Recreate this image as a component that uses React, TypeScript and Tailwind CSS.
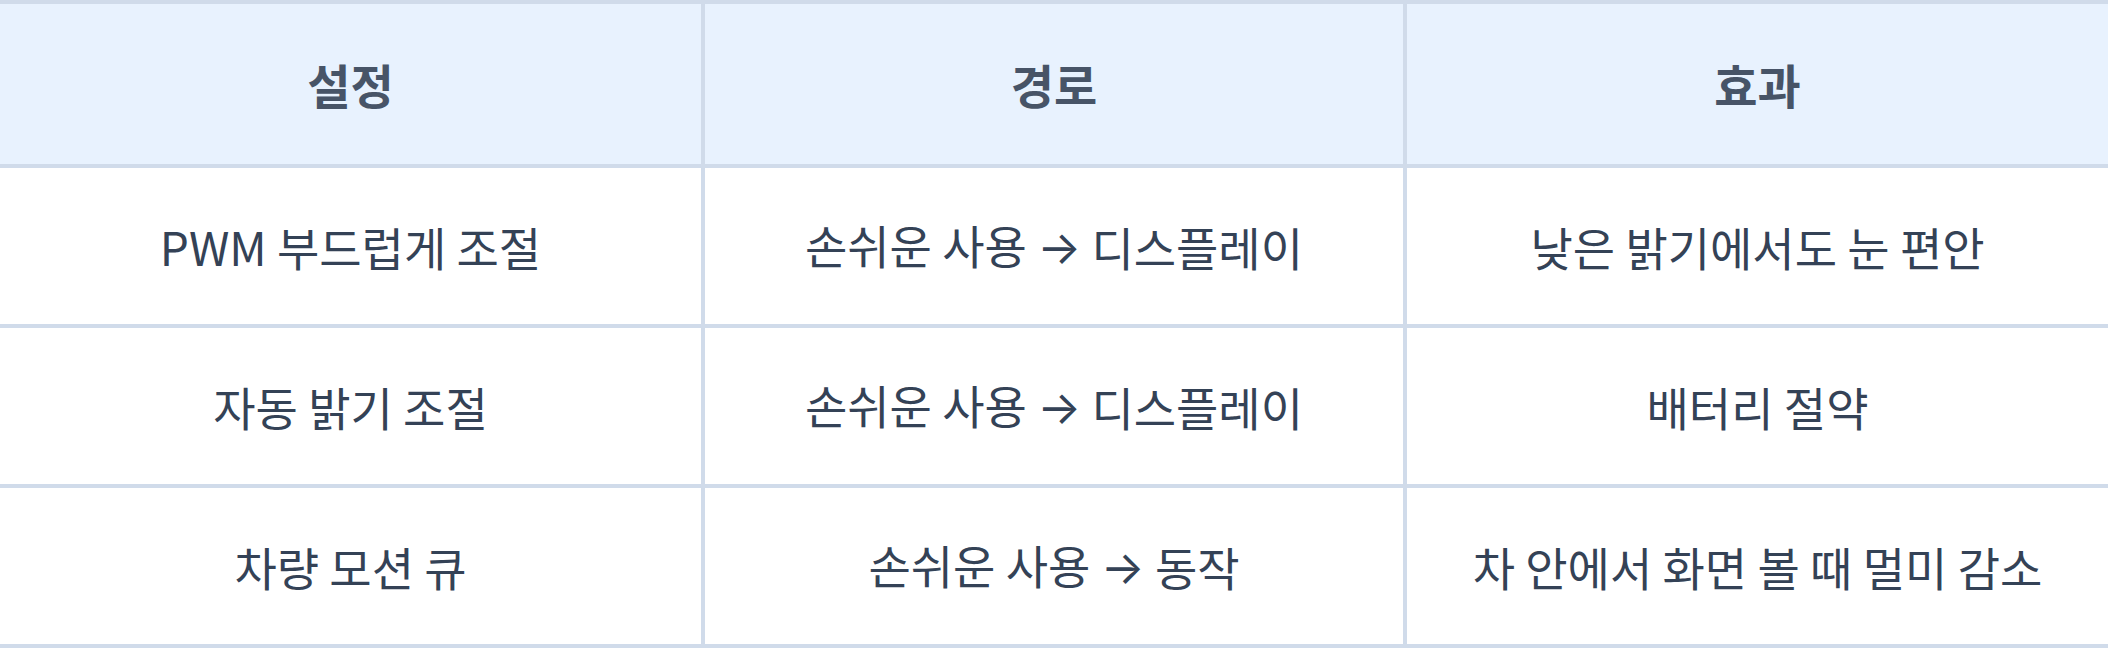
const header = ["설정", "경로", "효과"];

const rows = [
  ["PWM 부드럽게 조절", "손쉬운 사용 → 디스플레이", "낮은 밝기에서도 눈 편안"],
  ["자동 밝기 조절", "손쉬운 사용 → 디스플레이", "배터리 절약"],
  ["차량 모션 큐", "손쉬운 사용 → 동작", "차 안에서 화면 볼 때 멀미 감소"],
];

// arrows get Inter so the glyph has the short chevron look
const renderCell = (text: string) =>
  text.split("→").map((part, k, all) => (
    <span key={k}>
      {part}
      {k < all.length - 1 && (
        <span style={{ fontFamily: "Inter, sans-serif" }}>→</span>
      )}
    </span>
  ));

const App = () => {
  return (
    <div
      className="w-[2108px] h-[648px] bg-white overflow-hidden"
      style={{ fontFamily: '"Noto Sans CJK KR", "Noto Sans", sans-serif' }}
    >
      <div className="grid grid-cols-[701px_1fr_701px] grid-rows-[160px_156px_156px_156px] gap-[4px] py-[4px] bg-[#d0dbea]">
        {header.map((h) => (
          <div
            key={h}
            className="flex items-center justify-center bg-[#e8f2fe] text-[47px] font-bold text-[#475467]"
          >
            {h}
          </div>
        ))}
        {rows.map((row, i) =>
          row.map((cell, j) => (
            <div
              key={`${i}-${j}`}
              className="flex items-center justify-center whitespace-pre bg-white text-[46px] font-normal text-[#344256]"
            >
              {renderCell(cell)}
            </div>
          ))
        )}
      </div>
    </div>
  );
};

export default App;
